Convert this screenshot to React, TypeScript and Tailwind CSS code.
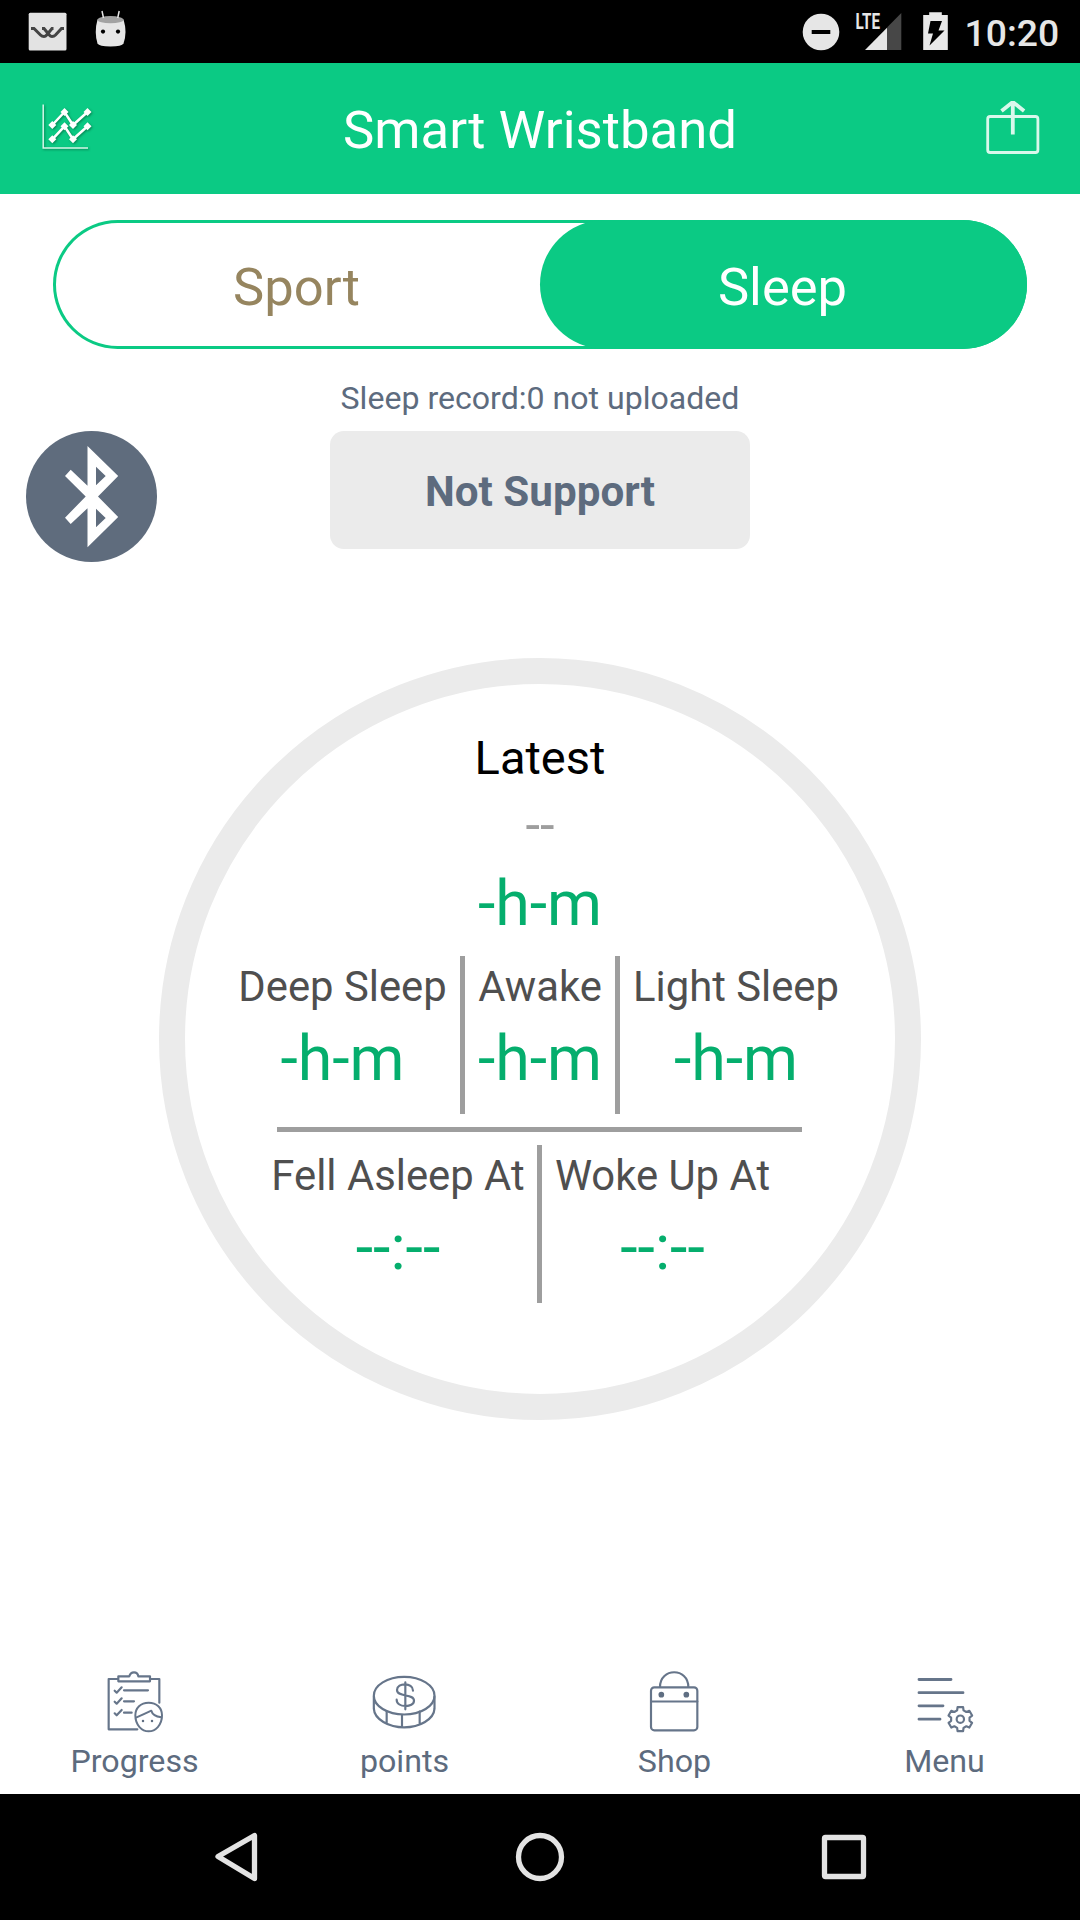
import React from "react";

const gearPath = (cx: number, cy: number) => {
  const pts: string[] = [];
  for (let i = 0; i < 6; i++) {
    const base = -90 + i * 60;
    for (const [da, r] of [[-20, 28], [-13, 37], [13, 37], [20, 28]]) {
      const a = ((base + da) * Math.PI) / 180;
      pts.push(`${(cx + r * Math.cos(a)).toFixed(1)} ${(cy + r * Math.sin(a)).toFixed(1)}`);
    }
  }
  return `M${pts.join("L")}Z`;
};

function StatusBar() {
  return (
    <div className="flex h-[63px] items-center bg-black">
      <svg className="h-[63px] w-[140px]" viewBox="0 0 140 63">
        <rect x="28.7" y="12.7" width="37.8" height="37.8" rx="1.5" fill="#e3e3e3" />
        <g fill="none" stroke="#444" strokeWidth="3">
          <path d="M31 28.500h3l6.500 6.500q1.500 1.500 3.500 1.500q1.500 0 2.700-1.500l5.300-6.500h1.500" />
          <path d="M42 28.500h2l5.300 6.500q1.200 1.500 2.700 1.500q2 0 3.500-1.500l6-6.500h2.500" />
        </g>
        <path d="M97.500 19.500Q94 32 97.500 43.500Q99 46.500 110.500 46.500T123.500 43.500Q127.500 32 123.500 19.500Z" fill="#e6e6e6" />
        <ellipse cx="110.500" cy="19.700" rx="13" ry="3.600" fill="#a3a3a3" />
        <path d="M102 11l1.500 7M119.200 11l-1.500 7" stroke="#e6e6e6" strokeWidth="1.500" />
        <circle cx="103" cy="31.600" r="2.100" />
        <circle cx="118" cy="31.600" r="2.100" />
      </svg>
      <svg className="ml-auto h-[63px] w-[160px]" viewBox="795 0 160 63">
        <circle cx="820" cy="32" r="18.300" fill="#e6e6e6" />
        <rect x="810.700" y="30" width="18.600" height="4" />
        <path d="M900.300 13v37h-14.300V27.500Z" fill="#474747" />
        <path d="M864 50h22V27.800Z" fill="#e6e6e6" />
        <text x="854.500" y="29" fontFamily="Roboto" fontWeight="700" fontSize="21.500" fill="#e6e6e6" textLength="24.500" lengthAdjust="spacingAndGlyphs">LTE</text>
        <path d="M922.200 15h6v-2.700h12.600V15h6v35h-24.600Z" fill="#e9e9e9" />
        <path d="M929.500 21h11.500l-3.500 9.500h6L928.500 45.500l3.500-12h-5Z" />
      </svg>
      <span className="mr-[22.500px] ml-[9px] w-[93px] pt-[2px] text-right text-[37.300px] leading-[48px] font-medium whitespace-nowrap text-[#e6e6e6]">10:20</span>
    </div>
  );
}

function Header() {
  return (
    <header className="flex h-[131px] items-center justify-between bg-[#0bca84] pr-[39px] pl-[39px]">
      <svg className="h-[56px] w-[56px] overflow-visible drop-shadow-[1px_1px_1px_rgba(0,60,30,0.5)]" viewBox="39 101.500 56 56">
        <path d="M43.200 105v43.500H88" fill="none" stroke="#d5f7e9" strokeWidth="1.500" />
        {[0, 14.300].map((dy) => (
          <g key={dy} transform={`translate(0 ${dy})`}>
            <path d="M52.300 125.500L64.500 112.500L73 125.500L87.500 112.500" fill="none" stroke="#fff" strokeWidth="2.500" />
            {[[52.300, 125.500], [64.500, 112.500], [73, 125.500], [87.500, 112.500]].map(([x, y]) => (
              <path key={x} d={`M${x - 4} ${y}l4-4l4 4l-4 4Z`} fill="#fff" />
            ))}
          </g>
        ))}
      </svg>
      <h1 className="pt-[2px] text-[52.700px] leading-[62px] text-white">Smart Wristband</h1>
      <svg className="h-[56px] w-[56px]" viewBox="984.500 101.500 56 56" fill="none">
        <rect x="987.200" y="117" width="50.200" height="36" rx="2.500" stroke="#d9f8ec" strokeWidth="2.800" />
        <path d="M1012.300 135V103M1001 111.500l11.300-9l11.300 9" stroke="#d9f8ec" strokeWidth="3.800" />
      </svg>
    </header>
  );
}

function Tabs() {
  return (
    <div className="mx-[53px] mt-[26px] flex h-[129px] rounded-[64.500px] bg-white text-[52.500px] leading-[62px] shadow-[inset_0_0_0_3px_#0bca84]">
      <button className="flex w-[487px] items-center justify-center pt-[4px] text-[#96855f]">Sport</button>
      <button className="flex w-[487px] items-center justify-center rounded-[64.500px] bg-[#0bca84] pt-[4px] pr-[2px] text-white">Sleep</button>
    </div>
  );
}

function Stat({ label, value, className }: { label: string; value: string; className: string }) {
  return (
    <div className={`flex flex-col items-center pt-[6px] whitespace-nowrap ${className}`}>
      <span className="text-[41.800px] leading-[50px] text-[#4f4f4f]">{label}</span>
      <span className="mt-[10px] text-[62.700px] leading-[74px] text-[#05ae6d]">{value}</span>
    </div>
  );
}

const Divider = () => <div className="h-[158px] w-[5px] shrink-0 bg-[#9e9e9e]" />;

function SleepRing() {
  return (
    <div className="mx-auto mt-[96px] flex h-[762px] w-[762px] flex-col items-center rounded-full border-[26px] border-[#ebebeb] pt-[46px]">
      <span className="text-[47px] leading-[56px] text-black">Latest</span>
      <span className="mt-[8px] text-[52.500px] leading-[62px] text-[#9e9e9e]">--</span>
      <span className="mt-[11px] text-[62.700px] leading-[74px] text-[#05ae6d]">-h-m</span>
      <div className="mt-[15px] flex">
        <Stat label="Deep Sleep" value="-h-m" className="w-[235px]" />
        <Divider />
        <Stat label="Awake" value="-h-m" className="w-[150px]" />
        <Divider />
        <Stat label="Light Sleep" value="-h-m" className="w-[235px] pr-[3px]" />
      </div>
      <div className="mt-[13px] mr-[1px] h-[5px] w-[525px] shrink-0 bg-[#9e9e9e]" />
      <div className="mt-[13px] flex w-[562px]">
        <Stat label="Fell Asleep At" value="--:--" className="w-[278px]" />
        <Divider />
        <Stat label="Woke Up At" value="--:--" className="w-[241px]" />
      </div>
    </div>
  );
}

function NavItem({ label, viewBox, wide, children }: { label: string; viewBox: string; wide?: boolean; children: React.ReactNode }) {
  return (
    <a className="flex w-[270px] flex-col items-center">
      <svg className={wide ? "h-[64px] w-[66px]" : "h-[64px] w-[60px]"} viewBox={viewBox} fill="none" stroke="#66758a" strokeWidth="6.500" strokeLinecap="round" strokeLinejoin="round">
        {children}
      </svg>
      <span className="mt-[7px] pr-[1px] text-[32.200px] leading-[40px] text-[#5d6b7e]">{label}</span>
    </a>
  );
}

function BottomNav() {
  return (
    <nav className="mt-auto flex pb-[13px]">
      <NavItem label="Progress" viewBox="135 60 180 192">
        <path d="M174 87H146V238H232M271 87H298V158" />
        <path d="M175 79H208Q211 67 222 67T235 79H270V94H175Z" />
        <path d="M192 121H264M192 154H222M192 188H215" />
        <path d="M164 122l6 6l15-16M164 155l6 6l15-16M164 190l6 6l15-16" />
        <path d="M266 158C242 158 226 174 226 196C226 226 246 244 266 244S306 226 306 196C306 174 290 158 266 158Z" strokeWidth="6" />
        <path d="M228 203Q253 192 274 182Q278 198 304 202" strokeWidth="6" />
        <circle cx="249" cy="213" r="3.800" fill="#5f6e82" stroke="none" />
        <circle cx="276" cy="213" r="3.800" fill="#5f6e82" stroke="none" />
      </NavItem>
      <NavItem label="points" viewBox="936 60 198 192" wide>
        <ellipse cx="1032.500" cy="137" rx="91" ry="56.500" />
        <path d="M941.500 140V176C943 208 986 232 1032.500 232S1122 208 1123.500 176V140M980 184V219M1026 195V231M1079 185V219" />
        <path d="M1036 97V178M1059 122C1059 97 1011 97 1011 120C1011 143 1062 130 1062 152C1062 174 1010 174 1010 149" />
      </NavItem>
      <NavItem label="Shop" viewBox="135 60 180 192">
        <rect x="153" y="112" width="139" height="129" rx="10" />
        <path d="M153 154.500H292M180 111C180 52 265 52 265 111" />
        <circle cx="184" cy="134" r="8.500" fill="#5f6e82" stroke="none" />
        <circle cx="259" cy="134" r="8.500" fill="#5f6e82" stroke="none" />
      </NavItem>
      <NavItem label="Menu" viewBox="945 60 180 192">
        <path d="M957 88.500H1053M957 128H1089M957 167.500H1029M957 207.500H1020" strokeWidth="8.500" />
        <path d={gearPath(1081, 207.500)} />
        <circle cx="1081" cy="207.500" r="11" />
      </NavItem>
    </nav>
  );
}

function SystemNav() {
  return (
    <div className="flex h-[126px] items-center justify-center bg-black">
      {[
        <path key="back" d="M12 30L48.500 9V52Z" />,
        <circle key="home" cx="30" cy="30.500" r="21.500" />,
        <rect key="recent" x="10.500" y="11" width="39" height="39" rx="1" />,
      ].map((shape, i) => (
        <div key={i} className="flex w-[304px] justify-center">
          <svg className="h-[60px] w-[60px]" viewBox="0 0.500 60 60" fill="none" stroke="#e3e3e3" strokeWidth="5.300" strokeLinejoin="round">
            {shape}
          </svg>
        </div>
      ))}
    </div>
  );
}

export default function App() {
  return (
    <div className="flex h-[1920px] w-[1080px] flex-col overflow-hidden bg-white font-[Roboto,sans-serif]">
      <StatusBar />
      <Header />
      <Tabs />
      <p className="mt-[29px] text-center text-[32.100px] leading-[40px] text-[#5d6b7e]">Sleep record:0 not uploaded</p>
      <div className="mt-[13px] flex h-[131px] items-start pl-[26px]">
        <svg className="h-[131px] w-[131px]" viewBox="26 431 131 131">
          <circle cx="91.500" cy="496.500" r="65.500" fill="#5f6c7d" />
          <path
            fill="#fff"
            fillRule="evenodd"
            d="M87.500 446L118.200 476L98 496.500L118.200 517L87.500 547.300V508.300L70.700 524L65 517.700L85.700 496.500L65 476L70.700 469.700L87.500 485.700ZM96 466.700V485.300L105.700 476ZM96 508.700V527.300L105.700 518Z"
          />
        </svg>
        <button className="ml-[173px] h-[118px] w-[420px] rounded-[14px] bg-[#ebebeb] pt-[3px] text-[42.200px] leading-[50px] font-bold text-[#5d6b7e]">Not Support</button>
      </div>
      <SleepRing />
      <BottomNav />
      <SystemNav />
    </div>
  );
}
